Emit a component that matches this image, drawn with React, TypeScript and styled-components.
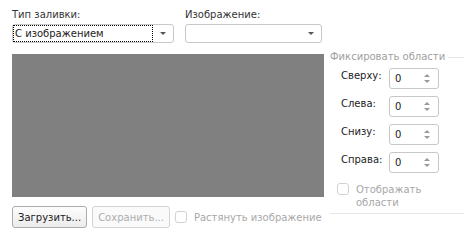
import React from 'react';
import styled, { createGlobalStyle } from 'styled-components';

const GlobalStyle = createGlobalStyle`
  html, body {
    margin: 0;
    padding: 0;
    background: #fff;
  }
  body {
    font-family: "DejaVu Sans", Tahoma, sans-serif;
    font-size: 10px;
    color: #333;
  }
`;

const Page = styled.div`
  width: 473px;
  height: 250px;
  box-sizing: border-box;
  padding: 9px 9px 0 12px;
  display: flex;
  gap: 6px;
`;

const LeftColumn = styled.div`
  width: 312px;
  display: flex;
  flex-direction: column;
`;

const FieldsRow = styled.div`
  display: flex;
  gap: 11px;
`;

const Field = styled.div<{ $width: number }>`
  width: ${p => p.$width}px;
  display: flex;
  flex-direction: column;
  gap: 3px;
`;

const Label = styled.span`
  line-height: 12px;
  color: #333;
  white-space: nowrap;
`;

const Combo = styled.div`
  height: 19px;
  box-sizing: border-box;
  border: 1px solid #c8c8c8;
  border-radius: 3px;
  background: #fff;
  display: flex;
  align-items: stretch;
`;

const ComboText = styled.span<{ $focused?: boolean }>`
  flex: 1;
  display: flex;
  align-items: center;
  padding-left: 2px;
  color: #222;
  outline: ${p => (p.$focused ? '1px dotted #000' : 'none')};
  outline-offset: -1px;
`;

const ComboButton = styled.span`
  width: 20px;
  display: flex;
  align-items: center;
  justify-content: center;
  &::after {
    content: '';
    border-left: 3px solid transparent;
    border-right: 3px solid transparent;
    border-top: 3px solid #555;
  }
`;

const Preview = styled.div`
  margin-top: 11px;
  height: 143px;
  background: #808080;
`;

const ButtonsRow = styled.div`
  margin-top: 9px;
  display: flex;
  align-items: center;
  gap: 5px;
`;

const Button = styled.button<{ $disabled?: boolean }>`
  height: 22px;
  box-sizing: border-box;
  padding: 0 5px;
  border: 1px solid ${p => (p.$disabled ? '#d4d4d4' : '#acacac')};
  border-radius: 3px;
  background: ${p => (p.$disabled ? '#fafafa' : 'linear-gradient(#fdfdfd, #ececec)')};
  color: ${p => (p.$disabled ? '#adadad' : '#222')};
  font-family: inherit;
  font-size: 10px;
  cursor: default;
`;

const CheckLabel = styled.label`
  display: flex;
  align-items: flex-start;
  gap: 7px;
  color: #a8a8a8;
  line-height: 13px;
  white-space: nowrap;
`;

const Checkbox = styled.span`
  flex: none;
  width: 12px;
  height: 12px;
  box-sizing: border-box;
  border: 1px solid #d2d2d2;
  border-radius: 3px;
  background: #fff;
`;

const Group = styled.div`
  width: 134px;
  height: 205px;
  box-sizing: border-box;
  border-bottom: 1px solid #e6e6e6;
  display: flex;
  flex-direction: column;
`;

const GroupHeader = styled.div`
  margin-top: 42px;
  display: flex;
  align-items: center;
  gap: 3px;
  color: #a0a0a0;
  line-height: 12px;
  &::after {
    content: '';
    flex: 1;
    height: 1px;
    background: #e6e6e6;
  }
`;

const SpinRows = styled.div`
  margin-top: 5px;
  padding-left: 11px;
  display: flex;
  flex-direction: column;
  gap: 7px;
`;

const SpinRow = styled.div`
  display: flex;
  align-items: flex-start;
`;

const SpinLabel = styled.span`
  width: 48px;
  padding-top: 2px;
  color: #222;
`;

const Spin = styled.div`
  width: 50px;
  height: 21px;
  box-sizing: border-box;
  border: 1px solid #c8c8c8;
  border-radius: 3px;
  display: flex;
  align-items: center;
  padding-left: 5px;
  color: #222;
`;

const SpinValue = styled.span`
  flex: 1;
`;

const SpinArrows = styled.span`
  width: 22px;
  display: flex;
  flex-direction: column;
  align-items: center;
  gap: 3px;
  &::before,
  &::after {
    content: '';
    border-left: 3px solid transparent;
    border-right: 3px solid transparent;
  }
  &::before {
    border-bottom: 3px solid #9a9a9a;
  }
  &::after {
    border-top: 3px solid #9a9a9a;
  }
`;

const GroupCheck = styled.div`
  margin-top: 10px;
  padding-left: 7px;
`;

const sides = ['Сверху:', 'Слева:', 'Снизу:', 'Справа:'];

export default function App() {
  return (
    <>
      <GlobalStyle />
      <Page>
        <LeftColumn>
          <FieldsRow>
            <Field $width={162}>
              <Label>Тип заливки:</Label>
              <Combo>
                <ComboText $focused>С изображением</ComboText>
                <ComboButton />
              </Combo>
            </Field>
            <Field $width={137}>
              <Label>Изображение:</Label>
              <Combo>
                <ComboText />
                <ComboButton />
              </Combo>
            </Field>
          </FieldsRow>
          <Preview />
          <ButtonsRow>
            <Button>Загрузить...</Button>
            <Button $disabled>Сохранить...</Button>
            <CheckLabel>
              <Checkbox />
              Растянуть изображение
            </CheckLabel>
          </ButtonsRow>
        </LeftColumn>
        <Group>
          <GroupHeader>Фиксировать области</GroupHeader>
          <SpinRows>
            {sides.map(s => (
              <SpinRow key={s}>
                <SpinLabel>{s}</SpinLabel>
                <Spin>
                  <SpinValue>0</SpinValue>
                  <SpinArrows />
                </Spin>
              </SpinRow>
            ))}
          </SpinRows>
          <GroupCheck>
            <CheckLabel>
              <Checkbox />
              Отображать<br />области
            </CheckLabel>
          </GroupCheck>
        </Group>
      </Page>
    </>
  );
}
